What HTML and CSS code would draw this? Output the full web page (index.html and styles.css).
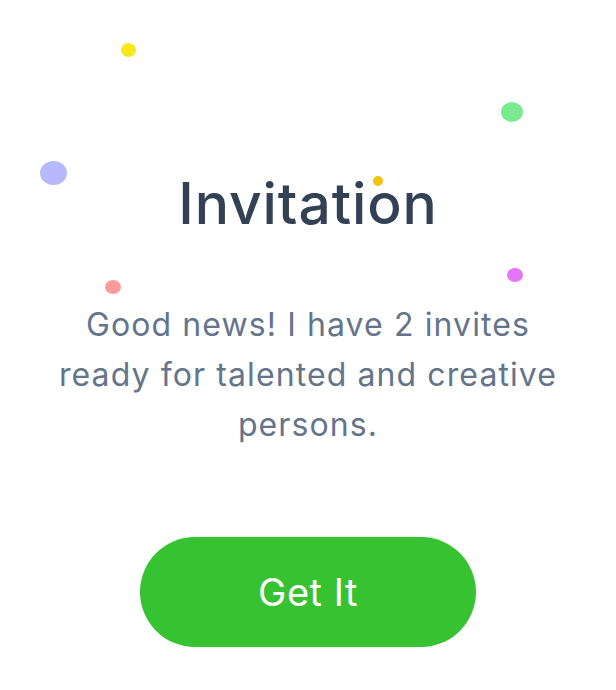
FILE: index.html
```html
<!DOCTYPE html>
<html lang="en">
<head>
<meta charset="utf-8">
<title>Invitation</title>
<link rel="stylesheet" href="styles.css">
</head>
<body>
<main class="card">
  <span class="dot dot-yellow"></span>
  <span class="dot dot-lavender"></span>
  <span class="dot dot-green"></span>
  <span class="dot dot-amber"></span>
  <span class="dot dot-pink"></span>
  <span class="dot dot-magenta"></span>
  <h1 class="title">Invitation</h1>
  <p class="message">Good news! I have 2 invites ready for talented and creative persons.</p>
  <button class="cta" type="button">Get It</button>
</main>
</body>
</html>
```

FILE: styles.css
```css
* { box-sizing: border-box; }
html, body {
  margin: 0;
  padding: 0;
  background: #ffffff;
}
body {
  font-family: Inter, "Noto Sans", sans-serif;
}
.card {
  position: relative;
  width: 616px;
  height: 690px;
  display: flex;
  flex-direction: column;
  align-items: center;
  padding-top: 164px;
}
.title {
  margin: 0;
  font-size: 57px;
  font-weight: 500;
  line-height: 80px;
  letter-spacing: 0.9px;
  color: #334155;
}
.message {
  margin: 56px 0 0;
  width: 520px;
  text-align: center;
  font-size: 32px;
  line-height: 50px;
  letter-spacing: 1.1px;
  color: #64748b;
}
.cta {
  margin-top: 87px;
  width: 336px;
  height: 110px;
  border: none;
  border-radius: 55px;
  background: #37c232;
  color: #ffffff;
  font-family: inherit;
  font-size: 38px;
  font-weight: 400;
  letter-spacing: 0.5px;
  cursor: pointer;
}
.dot {
  position: absolute;
  border-radius: 50%;
}
.dot-yellow { left: 121px; top: 43px; width: 15px; height: 14px; background: #f8e71c; }
.dot-lavender { left: 40px; top: 161px; width: 27px; height: 24px; background: #b8b8ff; }
.dot-green { left: 501px; top: 102px; width: 22px; height: 20px; background: #7beb90; }
.dot-amber { left: 373px; top: 176px; width: 10px; height: 10px; background: #f5c211; }
.dot-pink { left: 105px; top: 280px; width: 16px; height: 14px; background: #fb9a9a; }
.dot-magenta { left: 507px; top: 268px; width: 16px; height: 14px; background: #e575f5; }
```
